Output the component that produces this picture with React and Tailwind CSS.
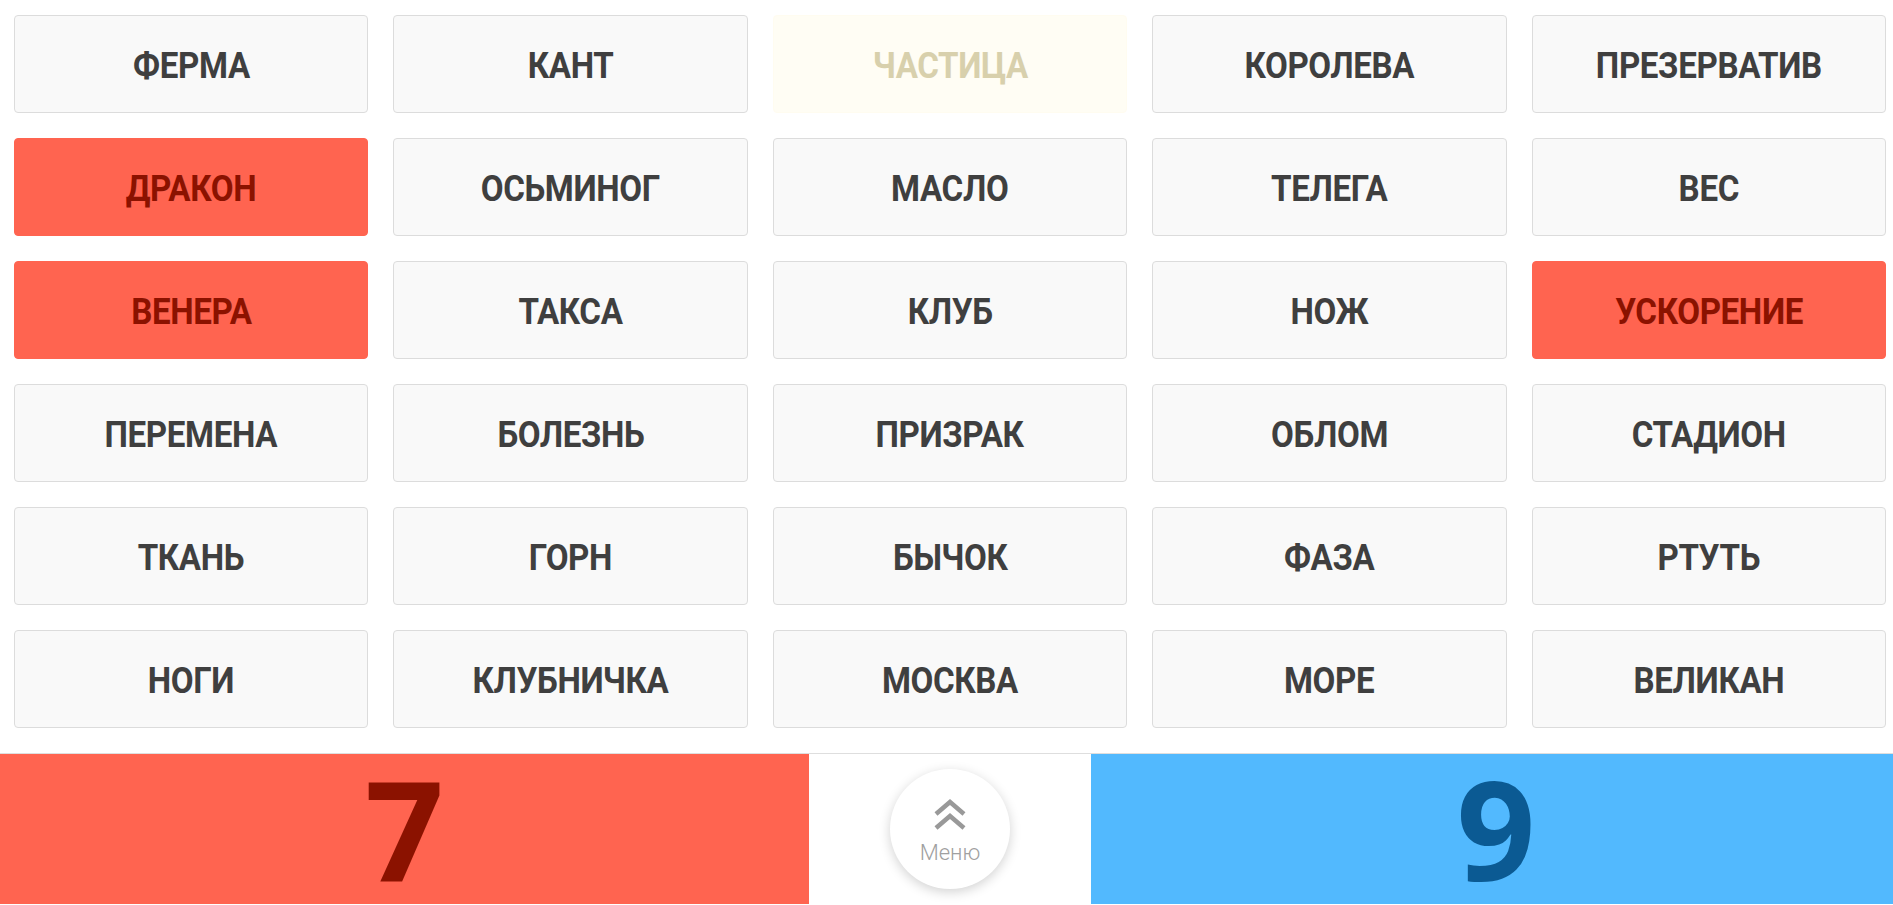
import React from "react";

const words = [
  ["ФЕРМА", "n"], ["КАНТ", "n"], ["ЧАСТИЦА", "y"], ["КОРОЛЕВА", "n"], ["ПРЕЗЕРВАТИВ", "n"],
  ["ДРАКОН", "r"], ["ОСЬМИНОГ", "n"], ["МАСЛО", "n"], ["ТЕЛЕГА", "n"], ["ВЕС", "n"],
  ["ВЕНЕРА", "r"], ["ТАКСА", "n"], ["КЛУБ", "n"], ["НОЖ", "n"], ["УСКОРЕНИЕ", "r"],
  ["ПЕРЕМЕНА", "n"], ["БОЛЕЗНЬ", "n"], ["ПРИЗРАК", "n"], ["ОБЛОМ", "n"], ["СТАДИОН", "n"],
  ["ТКАНЬ", "n"], ["ГОРН", "n"], ["БЫЧОК", "n"], ["ФАЗА", "n"], ["РТУТЬ", "n"],
  ["НОГИ", "n"], ["КЛУБНИЧКА", "n"], ["МОСКВА", "n"], ["МОРЕ", "n"], ["ВЕЛИКАН", "n"],
];

const styles = {
  n: "bg-[#f9f9f9] border border-[#dcdcdc] text-[#3f3f3f]",
  r: "bg-[#ff6450] border border-[#ff6450] text-[#8b1200]",
  y: "bg-[#fffdf4] border border-[#fffcf0] text-[#d8d0ac]",
};

const Card = ({ word, kind }) => (
  <div
    className={`h-[98px] rounded-[4px] flex items-center justify-center pt-[4px] font-bold text-[36px] tracking-[-0.4px] ${styles[kind]}`}
    style={{ fontFamily: "Roboto, 'Liberation Sans', sans-serif" }}
  >
    <span className="inline-block scale-x-[0.92] whitespace-nowrap">{word}</span>
  </div>
);

const Chevrons = () => (
  <svg width="34" height="32" viewBox="0 0 34 32" fill="none" stroke="#999999" strokeWidth="4.5">
    <path d="M3 15 L17 3 L31 15" />
    <path d="M3 29 L17 17 L31 29" />
  </svg>
);

export default function App() {
  return (
    <div className="h-screen w-full flex flex-col bg-white overflow-hidden">
      <div className="grid grid-cols-5 gap-[25px] pt-[15px] pl-[14px] pr-[7px] pb-[25px]">
        {words.map(([w, k]) => (
          <Card key={w} word={w} kind={k} />
        ))}
      </div>
      <div className="flex h-[151px] border-t border-[#dedede]" style={{ fontFamily: "'Open Sans', sans-serif" }}>
        <div className="w-[809px] bg-[#ff6450] flex items-center justify-center">
          <span className="text-[138px] font-bold leading-none text-[#8b1200] -mt-[4px]">7</span>
        </div>
        <div className="w-[282px] bg-white flex items-center justify-center">
          <div className="w-[120px] h-[120px] rounded-full bg-white shadow-[0_3px_12px_rgba(0,0,0,0.18)] flex flex-col items-center justify-center pt-[4px]">
            <Chevrons />
            <span
              className="text-[22px] font-light text-[#a0a0a0] leading-none mt-[11px]"
              style={{ fontFamily: "Roboto, sans-serif" }}
            >
              Меню
            </span>
          </div>
        </div>
        <div className="flex-1 bg-[#52b9fe] flex items-center justify-center pl-[8px]">
          <span className="text-[138px] font-bold leading-none text-[#0b5a93] -mt-[4px]">9</span>
        </div>
      </div>
    </div>
  );
}
